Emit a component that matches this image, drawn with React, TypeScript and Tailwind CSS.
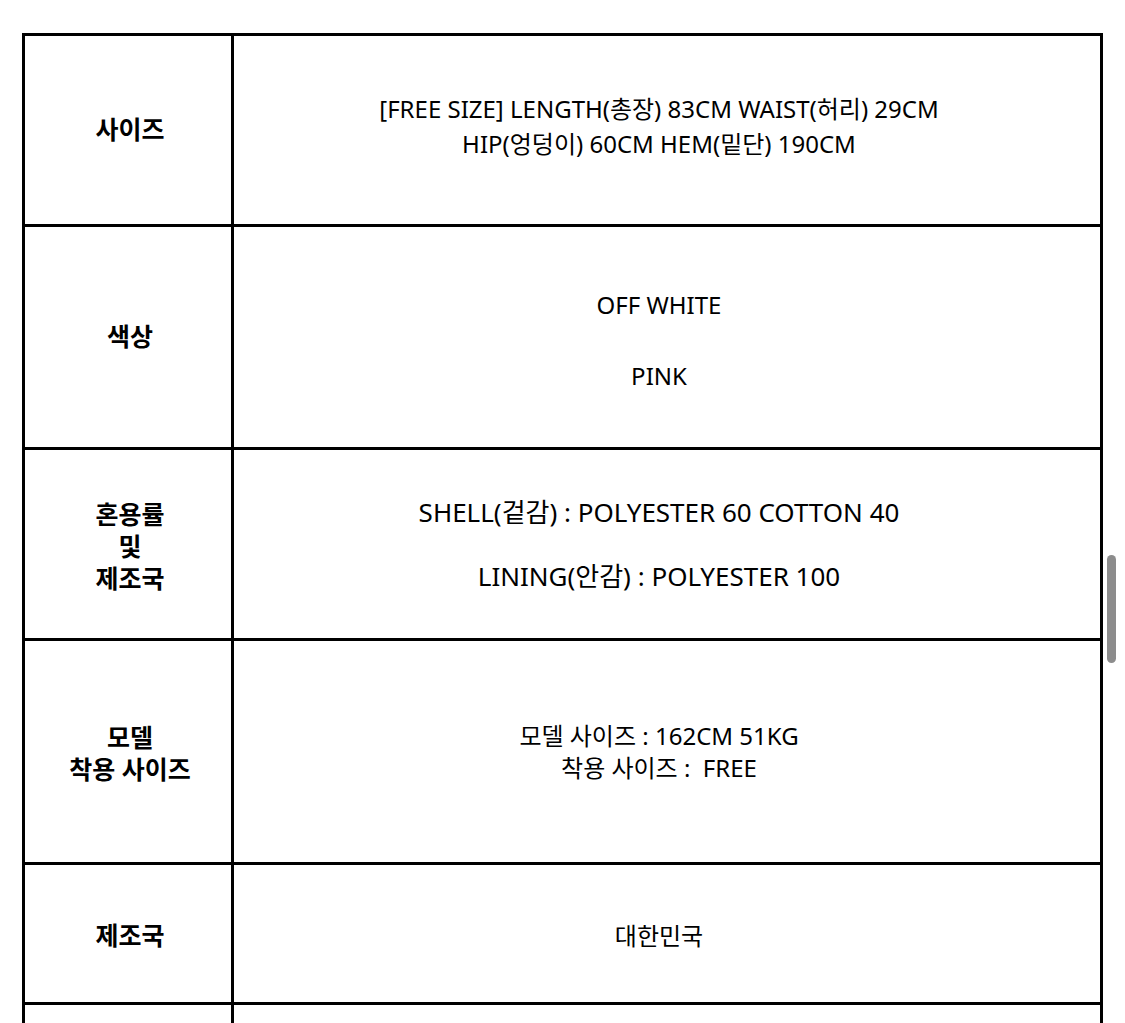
import React from "react";

const font = { fontFamily: '"Noto Sans", "Noto Sans CJK KR", sans-serif' };

type Row = { label: React.ReactNode; content: React.ReactNode; h: string };

export default function App() {
  const rows: Row[] = [
    {
      h: "h-[188px]",
      label: <div>사이즈</div>,
      content: (
        <div className="leading-[35px] pb-[9px]">
          <div>[FREE SIZE] LENGTH(총장) 83CM WAIST(허리) 29CM</div>
          <div>HIP(엉덩이) 60CM HEM(밑단) 190CM</div>
        </div>
      ),
    },
    {
      h: "h-[223px]",
      label: <div>색상</div>,
      content: (
        <div className="leading-[35.5px] pt-[6px]">
          <div>OFF WHITE</div>
          <div>&nbsp;</div>
          <div>PINK</div>
        </div>
      ),
    },
    {
      h: "h-[191px]",
      label: (
        <div className="leading-[32px] pt-[4px]">
          <div>혼용률</div>
          <div>및</div>
          <div>제조국</div>
        </div>
      ),
      content: (
        <div className="leading-[32px] text-[26px]">
          <div>SHELL(겉감) : POLYESTER 60 COTTON 40</div>
          <div>&nbsp;</div>
          <div>LINING(안감) : POLYESTER 100</div>
        </div>
      ),
    },
    {
      h: "h-[224px]",
      label: (
        <div className="leading-[32px] pt-[2px]">
          <div>모델</div>
          <div>착용 사이즈</div>
        </div>
      ),
      content: (
        <div className="leading-[32px]">
          <div>모델 사이즈 : 162CM 51KG</div>
          <div>착용 사이즈 :&nbsp; FREE</div>
        </div>
      ),
    },
    {
      h: "h-[140px]",
      label: <div className="pt-[4px]">제조국</div>,
      content: <div className="pt-[4px]">대한민국</div>,
    },
    {
      h: "h-[160px]",
      label: <div></div>,
      content: <div></div>,
    },
  ];

  return (
    <div className="relative w-[1125px] h-[1023px] overflow-hidden bg-white text-black" style={font}>
      <div className="pt-[33px] pl-[22px]">
        <div className="w-[1081px] border-[3px] border-black">
          {rows.map((r, i) => (
            <div
              key={i}
              className={`flex ${r.h} ${i > 0 ? "border-t-[3px] border-black" : ""}`}
            >
              <div className="w-[206px] shrink-0 flex items-center justify-center text-center font-bold text-[25px] pl-[4px]">
                {r.label}
              </div>
              <div className="flex-1 border-l-[3px] border-black flex items-center justify-center text-center text-[24px] pr-[16px]">
                {r.content}
              </div>
            </div>
          ))}
        </div>
      </div>
      <div className="absolute left-[1107px] top-[555px] w-[9px] h-[108px] rounded-full bg-[#8c8c8c]" />
    </div>
  );
}
